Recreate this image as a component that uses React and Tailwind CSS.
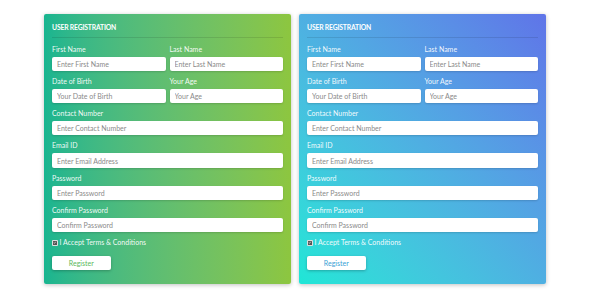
const fields = [
  [
    { label: "First Name", placeholder: "Enter First Name" },
    { label: "Last Name", placeholder: "Enter Last Name" },
  ],
  [
    { label: "Date of Birth", placeholder: "Your Date of Birth" },
    { label: "Your Age", placeholder: "Your Age" },
  ],
  [{ label: "Contact Number", placeholder: "Enter Contact Number" }],
  [{ label: "Email ID", placeholder: "Enter Email Address" }],
  [{ label: "Password", placeholder: "Enter Password" }],
  [{ label: "Confirm Password", placeholder: "Confirm Password" }],
];

const Field = ({ label, placeholder }) => (
  <div className="flex-1 flex flex-col">
    <label className="text-[7px] leading-[9px] text-white/95 mb-[3px]">{label}</label>
    <input
      type="text"
      placeholder={placeholder}
      className="h-[14.3px] w-full rounded-[2px] bg-white px-[5px] text-[7px] text-gray-700 placeholder:text-[#8a8a8a] outline-none shadow-[0_1px_2px_rgba(0,0,0,0.15)]"
    />
  </div>
);

const RegistrationCard = ({ bg, btnText }) => (
  <div className={`w-[247px] rounded-[2px] px-[8px] pt-[8.5px] pb-[12px] shadow-[0_1px_4px_rgba(0,0,0,0.25)] ${bg}`}>
    <div className="text-[6.8px] leading-[9px] font-bold text-white tracking-tight">USER REGISTRATION</div>
    <div className="mt-[5.5px] h-px bg-black/10" />
    <div className="mt-[6.5px] flex flex-col gap-y-[6px]">
      {fields.map((row, i) => (
        <div key={i} className="flex gap-x-[4px]">
          {row.map((f) => (
            <Field key={f.label} {...f} />
          ))}
        </div>
      ))}
    </div>
    <div className="mt-[6px] flex items-center gap-[2px] text-[7px] leading-[9px] text-white/95">
      <span className="flex h-[5.5px] w-[5.5px] items-center justify-center rounded-[1px] bg-[#555] border border-white/80">
        <svg viewBox="0 0 10 10" className="h-[5px] w-[5px]">
          <path d="M2 5.2 L4.2 7.4 L8 2.8" fill="none" stroke="white" strokeWidth="1.8" />
        </svg>
      </span>
      <span>I Accept Terms &amp; Conditions</span>
    </div>
    <button
      type="button"
      className={`mt-[8.5px] h-[14.3px] w-[58.7px] rounded-[2px] bg-white text-[7px] shadow-[0_1px_3px_rgba(0,0,0,0.25)] ${btnText}`}
    >
      Register
    </button>
  </div>
);

export default function App() {
  return (
    <div
      className="w-[590px] h-[300px] bg-white flex items-start justify-center gap-[8px] pt-[14px]"
      style={{ fontFamily: "Lato, 'Open Sans', sans-serif" }}
    >
      <RegistrationCard bg="bg-gradient-to-r from-[#17b590] to-[#8dc63f]" btnText="text-[#5cb85c]" />
      <RegistrationCard bg="bg-gradient-to-tr from-[#1ee6d6] to-[#5f74e8]" btnText="text-[#3a9fd5]" />
    </div>
  );
}
